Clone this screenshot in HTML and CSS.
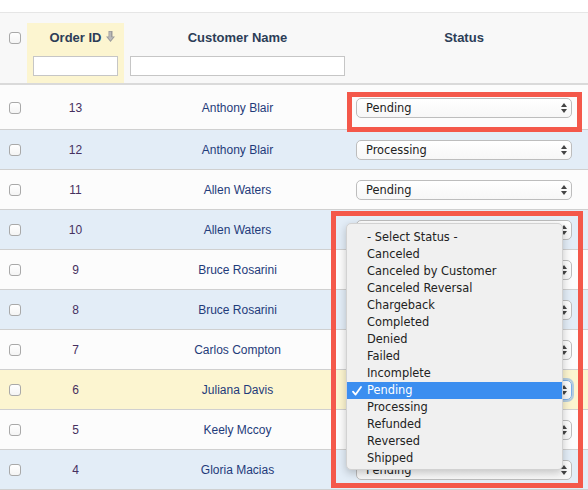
FILE: index.html
```html
<!DOCTYPE html>
<html>
<head>
<meta charset="utf-8">
<link rel="stylesheet" href="styles.css">
</head>
<body>
<div class="page">
  <div class="top-gap"></div>
  <div class="head">
    <div class="row head-row">
      <div class="cell cb-cell head-cb"><span class="cb"></span></div>
      <div class="cell hcell sorted">
        <div class="htitle">Order ID<svg class="sort" width="9" height="11" viewBox="0 0 9 11"><path d="M2.5 0h4v5.5H9L4.5 11 0 5.5h2.5z" fill="#9c9c9c"/><path d="M3.3 0.8h1.6v5.5h2.2L4.5 9.6 2 6.3h1.3z" fill="#bcbcbc"/></svg></div>
        <input class="filter" type="text">
      </div>
      <div class="cell hcell">
        <div class="htitle">Customer Name</div>
        <input class="filter" type="text">
      </div>
      <div class="cell hcell">
        <div class="htitle">Status</div>
      </div>
      <div class="cell"></div>
    </div>
  </div>

  <div class="row brow first white">
    <div class="cell cb-cell"><span class="cb"></span></div>
    <div class="cell id">13</div>
    <div class="cell name">Anthony Blair</div>
    <div class="cell st"><div class="select">Pending<span class="arrows"></span></div></div>
    <div class="cell"></div>
  </div>
  <div class="row brow blue">
    <div class="cell cb-cell"><span class="cb"></span></div>
    <div class="cell id">12</div>
    <div class="cell name">Anthony Blair</div>
    <div class="cell st"><div class="select">Processing<span class="arrows"></span></div></div>
    <div class="cell"></div>
  </div>
  <div class="row brow white">
    <div class="cell cb-cell"><span class="cb"></span></div>
    <div class="cell id">11</div>
    <div class="cell name">Allen Waters</div>
    <div class="cell st"><div class="select">Pending<span class="arrows"></span></div></div>
    <div class="cell"></div>
  </div>
  <div class="row brow blue">
    <div class="cell cb-cell"><span class="cb"></span></div>
    <div class="cell id">10</div>
    <div class="cell name">Allen Waters</div>
    <div class="cell st"><div class="select">Pending<span class="arrows"></span></div></div>
    <div class="cell"></div>
  </div>
  <div class="row brow white">
    <div class="cell cb-cell"><span class="cb"></span></div>
    <div class="cell id">9</div>
    <div class="cell name">Bruce Rosarini</div>
    <div class="cell st"><div class="select">Pending<span class="arrows"></span></div></div>
    <div class="cell"></div>
  </div>
  <div class="row brow blue">
    <div class="cell cb-cell"><span class="cb"></span></div>
    <div class="cell id">8</div>
    <div class="cell name">Bruce Rosarini</div>
    <div class="cell st"><div class="select">Pending<span class="arrows"></span></div></div>
    <div class="cell"></div>
  </div>
  <div class="row brow white">
    <div class="cell cb-cell"><span class="cb"></span></div>
    <div class="cell id">7</div>
    <div class="cell name">Carlos Compton</div>
    <div class="cell st"><div class="select">Pending<span class="arrows"></span></div></div>
    <div class="cell"></div>
  </div>
  <div class="row brow yellow">
    <div class="cell cb-cell"><span class="cb"></span></div>
    <div class="cell id">6</div>
    <div class="cell name">Juliana Davis</div>
    <div class="cell st"><div class="select focus">Pending<span class="arrows"></span></div></div>
    <div class="cell"></div>
  </div>
  <div class="row brow white">
    <div class="cell cb-cell"><span class="cb"></span></div>
    <div class="cell id">5</div>
    <div class="cell name">Keely Mccoy</div>
    <div class="cell st"><div class="select">Pending<span class="arrows"></span></div></div>
    <div class="cell"></div>
  </div>
  <div class="row brow blue">
    <div class="cell cb-cell"><span class="cb"></span></div>
    <div class="cell id">4</div>
    <div class="cell name">Gloria Macias</div>
    <div class="cell st"><div class="select">Pending<span class="arrows"></span></div></div>
    <div class="cell"></div>
  </div>

  <div class="menu">
    <div class="opt">- Select Status -</div>
    <div class="opt">Canceled</div>
    <div class="opt">Canceled by Customer</div>
    <div class="opt">Canceled Reversal</div>
    <div class="opt">Chargeback</div>
    <div class="opt">Completed</div>
    <div class="opt">Denied</div>
    <div class="opt">Failed</div>
    <div class="opt">Incomplete</div>
    <div class="opt sel"><svg class="check" width="10" height="10" viewBox="0 0 10 10"><path d="M1 5.6l2.6 3L9 1" fill="none" stroke="#fff" stroke-width="1.8" stroke-linecap="round" stroke-linejoin="round"/></svg>Pending</div>
    <div class="opt">Processing</div>
    <div class="opt">Refunded</div>
    <div class="opt">Reversed</div>
    <div class="opt">Shipped</div>
  </div>

  <div class="mark mark1"></div>
  <div class="mark mark2"></div>
</div>
</body>
</html>
```
FILE: styles.css
```css
html, body {
  margin: 0;
  padding: 0;
  background: #ffffff;
}
.page {
  position: relative;
  width: 588px;
  height: 490px;
  overflow: hidden;
  font-family: "Liberation Sans", Arial, sans-serif;
}
.top-gap {
  height: 12px;
}
.head {
  border-top: 1px solid #e6e6e6;
  border-bottom: 2px solid #dadada;
  background: #f8f8f8;
  padding-top: 10px;
}
.row {
  display: grid;
  grid-template-columns: 27px 97px 227px 226px 11px;
}
.head-row {
  height: 60px;
}
.cell {
  box-sizing: border-box;
}
.hcell {
  display: flex;
  flex-direction: column;
  align-items: center;
  padding: 7px 6px 0;
}
.sorted {
  background: #fcf5d0;
}
.htitle {
  font-weight: bold;
  font-size: 13px;
  line-height: 16px;
  color: #2c3d57;
  white-space: nowrap;
}
.sort {
  margin-left: 4px;
  margin-right: -13px;
  vertical-align: 0px;
}
.filter {
  box-sizing: border-box;
  width: 100%;
  height: 20px;
  margin: 10px 0 0;
  border: 1px solid #c6c6c6;
  background: #fff;
  padding: 0;
  outline: none;
}
.cb-cell {
  padding-left: 9px;
  display: flex;
  align-items: center;
}
.head-cb {
  align-items: flex-start;
  padding-top: 9px;
}
.cb {
  box-sizing: border-box;
  display: block;
  width: 12px;
  height: 12px;
  border: 1px solid #a9a9a9;
  border-radius: 3px;
  background: linear-gradient(#ffffff, #f4f4f4);
}
.brow {
  height: 40px;
  border-bottom: 1px solid #d0d0d0;
  box-sizing: border-box;
  font-size: 12px;
}
.brow.first {
  height: 45px;
  padding-top: 2px;
}
.white { background: #fcfcfc; }
.blue { background: #e3edf7; }
.yellow { background: #fcf5d0; }
.id, .name {
  display: flex;
  align-items: center;
  justify-content: center;
}
.id { color: #46305f; }
.name { color: #1f3b7a; }
.st {
  display: flex;
  align-items: center;
  padding: 0 5px;
}
.select {
  position: relative;
  box-sizing: border-box;
  width: 100%;
  height: 20px;
  border: 1px solid #bdbdbd;
  border-radius: 5px;
  background: linear-gradient(#ffffff, #f7f7f7);
  padding-left: 9px;
  font-family: "DejaVu Sans", Verdana, sans-serif;
  font-size: 11.4px;
  line-height: 18px;
  color: #222;
}
.select.focus {
  border-color: #7eaee6;
  box-shadow: 0 0 0 2px rgba(120, 170, 235, 0.55);
}
.arrows {
  position: absolute;
  right: 4px;
  top: 4px;
  width: 6px;
  height: 10px;
}
.arrows::before,
.arrows::after {
  content: "";
  position: absolute;
  left: 0;
  border-left: 3px solid transparent;
  border-right: 3px solid transparent;
}
.arrows::before {
  top: 0;
  border-bottom: 4px solid #444;
}
.arrows::after {
  bottom: 0;
  border-top: 4px solid #444;
}
.menu {
  position: absolute;
  left: 346px;
  top: 223px;
  width: 217px;
  height: 247px;
  box-sizing: border-box;
  padding-top: 5px;
  background: #f0f0f0;
  border: 1px solid #d2d2d2;
  border-radius: 5px;
  box-shadow: 0 3px 9px rgba(0, 0, 0, 0.22);
  font-family: "DejaVu Sans", Verdana, sans-serif;
  font-size: 11.4px;
  color: #222;
}
.opt {
  position: relative;
  height: 17px;
  line-height: 17px;
  padding-left: 20px;
  white-space: nowrap;
}
.opt.sel {
  background: #3b8ef0;
  color: #ffffff;
}
.check {
  position: absolute;
  left: 5px;
  top: 4px;
}
.mark {
  position: absolute;
  box-sizing: border-box;
  border: 5px solid #f4584a;
}
.mark1 {
  left: 347px;
  top: 92px;
  width: 235px;
  height: 40px;
}
.mark2 {
  left: 331px;
  top: 211px;
  width: 252px;
  height: 277px;
}
```
